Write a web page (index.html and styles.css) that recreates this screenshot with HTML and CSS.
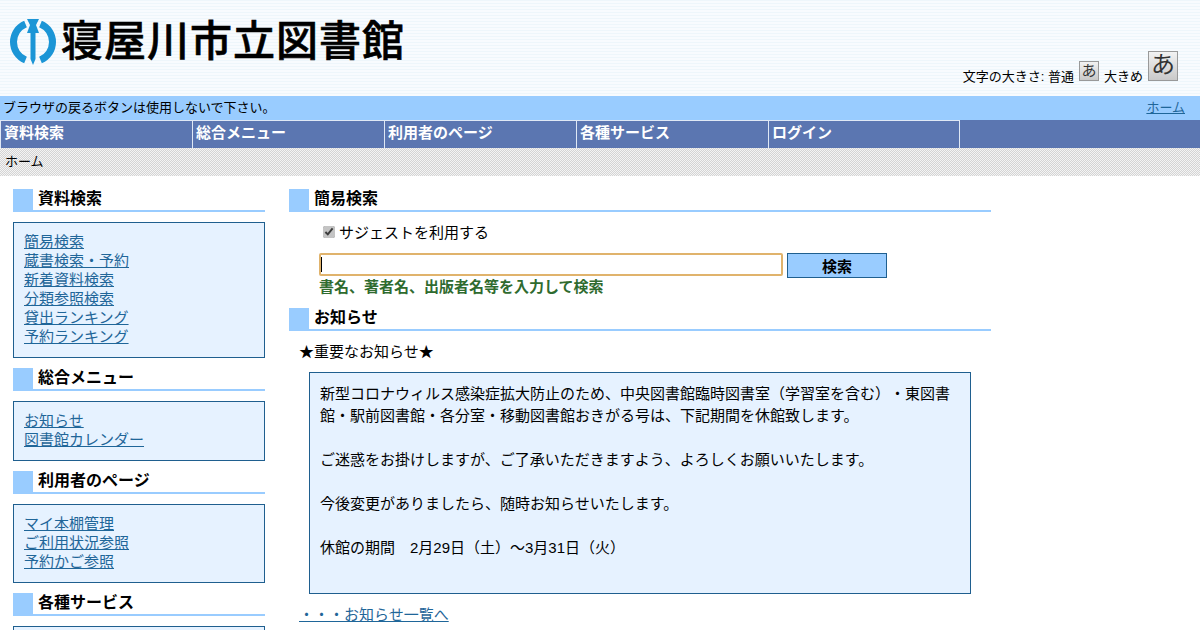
FILE: index.html
```html
<!DOCTYPE html>
<html lang="ja">
  <head>
    <meta charset="UTF-8" />
    <title>寝屋川市立図書館</title>
    <link rel="stylesheet" href="styles.css">
  </head>
  <body>
    <div class="header">
      <div class="logo">
        <svg class="logo-mark" width="48" height="48" viewBox="0 0 48 48">
          <path d="M16.5 6 A19.5 19.5 0 0 0 16.5 42 M31.5 6 A19.5 19.5 0 0 1 31.5 42" fill="none" stroke="#1b95d6" stroke-width="7"/>
          <path d="M18 1 L30 1 L27 7 L30 15 L26.5 15 L26.5 41 L24 47 L21.5 41 L21.5 15 L18 15 L21 7 Z" fill="#1b95d6"/>
        </svg>
        <span class="logo-text">寝屋川市立図書館</span>
      </div>
      <div class="font-size">
        <span>文字の大きさ: 普通</span>
        <span class="size-btn small">あ</span>
        <span>大きめ</span>
        <span class="size-btn large">あ</span>
      </div>
    </div>
    <div class="notice-bar">
      <span>ブラウザの戻るボタンは使用しないで下さい。</span>
      <a href="#">ホーム</a>
    </div>
    <ul class="nav">
      <li>資料検索</li>
      <li>総合メニュー</li>
      <li>利用者のページ</li>
      <li>各種サービス</li>
      <li>ログイン</li>
    </ul>
    <div class="breadcrumb">ホーム</div>
    <div class="layout">
      <div class="sidebar">
        <h2 class="title">資料検索</h2>
        <div class="side-box">
          <a href="#">簡易検索</a>
          <a href="#">蔵書検索・予約</a>
          <a href="#">新着資料検索</a>
          <a href="#">分類参照検索</a>
          <a href="#">貸出ランキング</a>
          <a href="#">予約ランキング</a>
        </div>
        <h2 class="title">総合メニュー</h2>
        <div class="side-box">
          <a href="#">お知らせ</a>
          <a href="#">図書館カレンダー</a>
        </div>
        <h2 class="title">利用者のページ</h2>
        <div class="side-box">
          <a href="#">マイ本棚管理</a>
          <a href="#">ご利用状況参照</a>
          <a href="#">予約かご参照</a>
        </div>
        <h2 class="title">各種サービス</h2>
        <div class="side-box"></div>
      </div>
      <div class="main">
        <h2 class="title">簡易検索</h2>
        <label class="suggest"><input type="checkbox" checked />サジェストを利用する</label>
        <div class="search-row">
          <input class="search-input" type="text" />
          <button class="search-button">検索</button>
        </div>
        <div class="hint">書名、著者名、出版者名等を入力して検索</div>
        <h2 class="title">お知らせ</h2>
        <p class="important">★重要なお知らせ★</p>
        <div class="news-box">
          <p>新型コロナウィルス感染症拡大防止のため、中央図書館臨時図書室（学習室を含む）・東図書館・駅前図書館・各分室・移動図書館おきがる号は、下記期間を休館致します。</p>
          <p>ご迷惑をお掛けしますが、ご了承いただきますよう、よろしくお願いいたします。</p>
          <p>今後変更がありましたら、随時お知らせいたします。</p>
          <p>休館の期間　2月29日（土）～3月31日（火）</p>
        </div>
        <a class="more" href="#">・・・お知らせ一覧へ</a>
      </div>
    </div>
  </body>
</html>
```

FILE: styles.css
```css
html, body {
  height: 630px;
  overflow: hidden;
}
body {
  font-family: "Liberation Sans", "Noto Sans CJK JP", sans-serif;
  font-size: 15px;
  text-spacing-trim: space-all;
  margin: 0;
  padding: 0;
  background-color: #fff;
  color: #000;
}
a {
  color: #1f6699;
}
.header {
  height: 96px;
  display: flex;
  justify-content: space-between;
  align-items: flex-end;
  background-color: #f4f9fd;
  background-image: repeating-linear-gradient(#eef6fb 0, #eef6fb 1px, #f8fbfe 1px, #f8fbfe 3px);
}
.logo {
  align-self: flex-start;
  display: flex;
  align-items: center;
  gap: 4px;
  padding: 18px 0 0 9px;
}
.logo-text {
  font-size: 42px;
  line-height: 48px;
  font-weight: 500;
  white-space: nowrap;
  letter-spacing: 1px;
  -webkit-text-stroke: 0.6px #000;
}
.font-size {
  display: flex;
  align-items: flex-end;
  gap: 5px;
  padding: 0 22px 10px 0;
  font-size: 13px;
  line-height: 18px;
}
.size-btn {
  display: block;
  text-align: center;
  color: #333;
  border: 1px solid #999;
  background: linear-gradient(#f2f2f2, #c9c9c9);
  margin-bottom: 5px;
}
.size-btn.small {
  width: 18px;
  height: 18px;
  font-size: 15px;
  line-height: 17px;
}
.size-btn.large {
  width: 28px;
  height: 28px;
  font-size: 24px;
  line-height: 26px;
}
.notice-bar {
  height: 24px;
  box-sizing: border-box;
  display: flex;
  justify-content: space-between;
  align-items: center;
  padding: 0 15px 4px 3px;
  background-color: #99ccff;
  font-size: 13px;
}
.nav {
  list-style: none;
  margin: 0;
  padding: 0;
  height: 28px;
  display: flex;
  background-color: #5b76b1;
}
.nav li {
  width: 192px;
  height: 28px;
  box-sizing: border-box;
  padding-left: 3px;
  border-top: 1px solid #dfe8f5;
  border-left: 1px solid #dfe8f5;
  color: #fff;
  font-weight: bold;
  line-height: 24px;
}
.nav li:last-child {
  border-right: 1px solid #dfe8f5;
}
.breadcrumb {
  height: 28px;
  padding-left: 5px;
  font-size: 13px;
  line-height: 28px;
  background-color: #e6e6e6;
  background-image: repeating-conic-gradient(#d4d4d4 0 25%, #f4f4f4 0 50%);
  background-size: 2px 2px;
}
.layout {
  display: flex;
  padding: 13px 0 0 13px;
  gap: 24px;
}
.sidebar {
  width: 252px;
}
.main {
  width: 702px;
}
.title {
  margin: 0;
  height: 21px;
  padding-left: 5px;
  font-size: 16px;
  line-height: 20px;
  font-weight: bold;
  border-left: 20px solid #99ccff;
  border-bottom: 2px solid #99ccff;
}
.side-box {
  margin: 10px 0;
  padding: 9px 10px 11px;
  border: 1px solid #1f5f8f;
  background-color: #e6f2ff;
  line-height: 19px;
}
.side-box a {
  display: block;
}
.suggest {
  display: flex;
  align-items: center;
  height: 22px;
  margin: 10px 0 0 34px;
  line-height: 22px;
}
.suggest input {
  margin: -2px 4px 0 0;
  width: 12px;
  height: 12px;
  accent-color: #c4c4c4;
}
.search-row {
  display: flex;
  align-items: flex-start;
  gap: 4px;
  margin: 9px 0 0 30px;
}
.search-input {
  width: 464px;
  height: 23px;
  box-sizing: border-box;
  margin: 0;
  padding: 0 0 0 2px;
  border: 2px solid #e0b36c;
  border-radius: 2px;
  background: #fff linear-gradient(#000, #000) no-repeat 0 center / 1px 15px;
}
.search-button {
  width: 100px;
  height: 25px;
  padding: 0;
  border: 1px solid #1f5f8f;
  background-color: #99ccff;
  font-family: inherit;
  font-size: 15px;
  font-weight: bold;
}
.hint {
  margin: 0 0 0 30px;
  color: #2f6b2f;
  font-weight: bold;
  font-size: 15px;
  line-height: 18px;
  height: 30px;
}
.important {
  margin: 0;
  padding: 11px 0 0 10px;
  line-height: 20px;
}
.news-box {
  margin: 10px 20px 0;
  height: 198px;
  padding: 10px 10px 12px;
  border: 1px solid #1f5f8f;
  background-color: #e6f2ff;
  line-height: 22px;
}
.news-box p {
  margin: 0 0 22px;
}
.more {
  display: inline-block;
  margin: 12px 0 0 10px;
  line-height: 18px;
}
```
